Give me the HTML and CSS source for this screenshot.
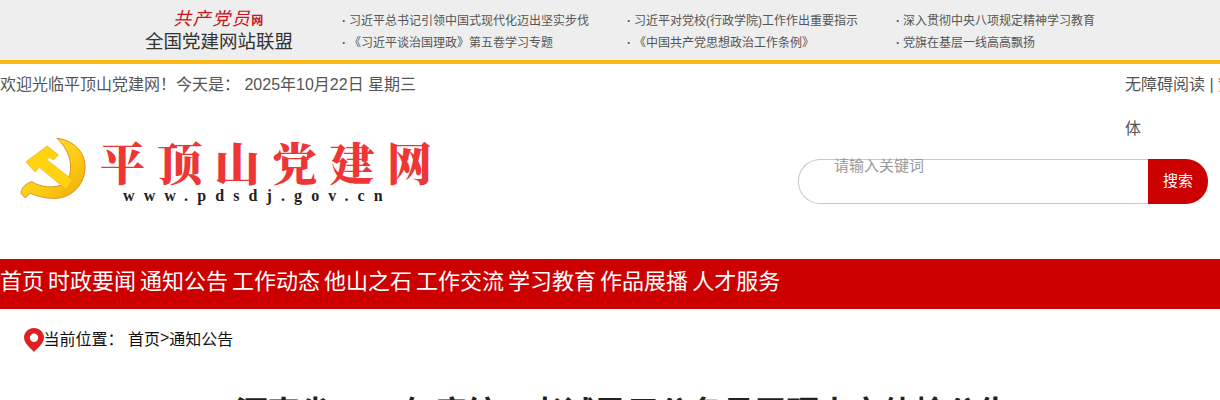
FILE: index.html
```html
<!DOCTYPE html>
<html lang="zh-CN">
<head>
  <meta charset="UTF-8">
  <title>通知公告 - 平顶山党建网</title>
  <link rel="stylesheet" href="styles.css">
</head>
<body>
  <div class="top-banner">
    <div class="alliance">
      <div class="alliance-logo">共产党员<span>网</span></div>
      <div class="alliance-name">全国党建网站联盟</div>
    </div>
    <ul class="banner-col col-1">
      <li>习近平总书记引领中国式现代化迈出坚实步伐</li>
      <li>《习近平谈治国理政》第五卷学习专题</li>
    </ul>
    <ul class="banner-col col-2">
      <li>习近平对党校(行政学院)工作作出重要指示</li>
      <li>《中国共产党思想政治工作条例》</li>
    </ul>
    <ul class="banner-col col-3">
      <li>深入贯彻中央八项规定精神学习教育</li>
      <li>党旗在基层一线高高飘扬</li>
    </ul>
  </div>

  <div class="welcome-bar">
    <div class="welcome">欢迎光临平顶山党建网！今天是： 2025年10月22日 星期三</div>
    <div class="access">无障碍阅读 | 繁体</div>
  </div>

  <div class="header">
    <div class="logo">
      <svg class="emblem" viewBox="0 0 270 240" width="90" height="80">
        <defs>
          <linearGradient id="gold" x1="0" y1="0" x2="1" y2="1">
            <stop offset="0" stop-color="#ffe23a"/>
            <stop offset="0.6" stop-color="#fdca12"/>
            <stop offset="1" stop-color="#eda90c"/>
          </linearGradient>
        </defs>
        <path fill="url(#gold)" stroke="#d9921a" stroke-width="3" d="M138 25 C185 30 225 65 222 115 C220 170 175 208 125 205 C95 204 72 196 58 190 L42 203 L30 190 C30 175 45 160 62 155 C90 172 130 178 160 160 C190 132 186 70 138 25 Z"/>
        <path fill="#ffd310" stroke="#eeac14" stroke-width="2" d="M45 95 L108 48 L142 74 L128 90 L115 82 L108 90 L185 150 L165 178 L85 112 L72 126 Z"/>
      </svg>
      <div class="logo-text">
        <div class="logo-name">平顶山党建网</div>
        <div class="logo-url">www.pdsdj.gov.cn</div>
      </div>
    </div>
    <div class="search">
      <div class="search-input">请输入关键词</div>
      <div class="search-btn">搜索</div>
    </div>
  </div>

  <div class="nav">
    <a href="#">首页</a>
    <a href="#">时政要闻</a>
    <a href="#">通知公告</a>
    <a href="#">工作动态</a>
    <a href="#">他山之石</a>
    <a href="#">工作交流</a>
    <a href="#">学习教育</a>
    <a href="#">作品展播</a>
    <a href="#">人才服务</a>
  </div>

  <div class="crumbs">
    <svg class="pin" viewBox="0 0 20 24" width="20" height="24">
      <path fill="#e02020" fill-rule="evenodd" d="M10 0 C15.5 0 20 4.3 20 9.6 C20 15 14 20 10 24 C6 20 0 15 0 9.6 C0 4.3 4.5 0 10 0 Z M10 5.5 A4.2 4.2 0 1 0 10 13.9 A4.2 4.2 0 1 0 10 5.5 Z"/>
    </svg>
    <span>当前位置： </span><a href="#">首页</a><span>&gt;</span><a href="#">通知公告</a>
  </div>

  <h1 class="title">河南省2025年度统一考试录用公务员平顶山市体检公告</h1>
</body>
</html>
```

FILE: styles.css
```css
html, body {
  margin: 0;
  padding: 0;
  overflow-x: hidden;
}
body {
  font-family: "Liberation Sans", "Noto Sans CJK SC", sans-serif;
  background-color: #fff;
  color: #333;
}
a {
  color: inherit;
  text-decoration: none;
}

.top-banner {
  display: flex;
  height: 60px;
  background-color: #eeeeee;
  border-bottom: 4px solid #fdb913;
}
.alliance {
  width: 148px;
  margin-left: 145px;
  padding-top: 9px;
  text-align: center;
}
.alliance-logo {
  height: 21px;
  font-family: "Liberation Serif", "Noto Sans CJK SC", serif;
  font-size: 18px;
  line-height: 21px;
  font-style: italic;
  letter-spacing: 1.5px;
  color: #c8141c;
}
.alliance-logo span {
  font-size: 12px;
  font-style: normal;
  font-weight: bold;
}
.alliance-name {
  font-size: 18.5px;
  line-height: 24px;
  color: #333;
}
.banner-col {
  list-style: none;
  margin: 0;
  padding: 10px 0 0;
  font-size: 12px;
  line-height: 22px;
  color: #555;
}
.banner-col li {
  white-space: nowrap;
}
.banner-col li::before {
  content: "·";
  display: inline-block;
  box-sizing: border-box;
  width: 8px;
  padding-left: 1px;
  font-weight: bold;
}
.col-1 {
  margin-left: 48px;
  width: 285px;
}
.col-2 {
  width: 269px;
}

.welcome-bar {
  display: flex;
  justify-content: space-between;
  height: 44px;
  font-size: 16px;
  line-height: 42px;
  color: #555;
}
.access {
  width: 112px;
  margin: -1px -17px 0 0;
  height: 88px;
  line-height: 44px;
}

.header {
  display: flex;
  justify-content: space-between;
  height: 151px;
}
.logo {
  display: flex;
  margin: 22px 0 0 11px;
  height: 80px;
}
.emblem {
  flex: none;
  margin-right: -1px;
}
.logo-text {
  padding-top: 6px;
}
.logo-name {
  font-family: "Noto Serif CJK SC", "Noto Sans CJK SC", serif;
  font-size: 45px;
  line-height: 51px;
  font-weight: 900;
  letter-spacing: 12.4px;
  color: #ee3636;
  white-space: nowrap;
}
.logo-url {
  margin: 0 0 0 23px;
  font-family: "Liberation Serif", serif;
  font-size: 16px;
  line-height: 18px;
  font-weight: bold;
  letter-spacing: 9.1px;
  color: #222;
}
.search {
  display: flex;
  width: 410px;
  height: 45px;
  margin: 51px 12px 0 0;
}
.search-input {
  flex: 1;
  padding-left: 35px;
  border: 1px solid #c8c8c8;
  border-right: none;
  border-radius: 22px 0 0 22px;
  font-size: 15px;
  line-height: 12px;
  color: #999;
}
.search-btn {
  width: 60px;
  background-color: #cc0000;
  border-radius: 0 22px 22px 0;
  font-size: 15px;
  line-height: 43px;
  text-align: center;
  color: #fff;
}

.nav {
  display: flex;
  gap: 4px;
  height: 50px;
  background-color: #cc0000;
  font-size: 22px;
  line-height: 46px;
  color: #fff;
}

.crumbs {
  display: flex;
  align-items: center;
  height: 24px;
  margin: 17px 0 0 24px;
  font-size: 16px;
  color: #111;
}
.crumbs span {
  white-space: pre;
}
.pin {
  flex: none;
  margin: 3px -0.5px 0 0;
}

.title {
  margin: 41px 0 0;
  padding-left: 26px;
  font-size: 32px;
  line-height: 44px;
  text-align: center;
  color: #222;
}
```
